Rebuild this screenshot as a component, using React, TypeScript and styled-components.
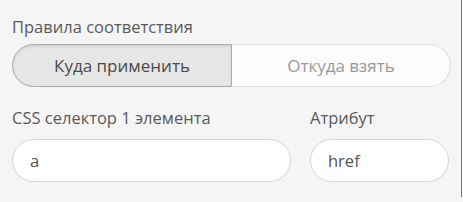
import { useState } from "react";
import styled, { createGlobalStyle } from "styled-components";

const Global = createGlobalStyle`
  html, body {
    margin: 0;
    padding: 0;
    background: #f5f5f5;
  }
  body {
    font-family: "Open Sans", "Noto Sans", sans-serif;
    color: #5a5a5a;
  }
`;

const Panel = styled.div`
  width: 462px;
  height: 197px;
  border-right: 1px solid #777;
  box-sizing: border-box;
  padding: 16px 12px 0 12px;
  overflow: hidden;
`;

const Label = styled.div<{ $gap?: number }>`
  font-size: 16.5px;
  line-height: 22px;
  color: #5a5a5a;
  margin-bottom: ${(p) => p.$gap ?? 6}px;
`;

const Segmented = styled.div`
  display: flex;
  width: 439px;
  height: 43px;
  margin-bottom: 20px;
`;

const Segment = styled.button<{ $active?: boolean; $side: "left" | "right" }>`
  flex: 1;
  box-sizing: border-box;
  height: 100%;
  margin: 0;
  font-family: inherit;
  font-size: 17px;
  cursor: pointer;
  color: ${(p) => (p.$active ? "#4a4a4a" : "#999")};
  background: ${(p) => (p.$active ? "#e6e6e6" : "#fcfcfc")};
  border: 1px solid ${(p) => (p.$active ? "#aaa" : "#ddd")};
  box-shadow: ${(p) => (p.$active ? "inset 0 1px 3px rgba(0,0,0,0.12)" : "none")};
  border-radius: ${(p) => (p.$side === "left" ? "22px 0 0 22px" : "0 22px 22px 0")};
  ${(p) => (p.$side === "right" ? "border-left: none;" : "")}
`;

const Row = styled.div`
  display: flex;
  gap: 19px;
  margin-bottom: 18px;
`;

const Field = styled.div<{ $width: number }>`
  width: ${(p) => p.$width}px;
  display: flex;
  flex-direction: column;
`;

const Input = styled.input`
  box-sizing: border-box;
  width: 100%;
  height: 43px;
  border: 1px solid #d6d6d6;
  border-radius: 22px;
  background: #fff;
  padding: 0 17px;
  font-family: inherit;
  font-size: 16.5px;
  color: #555;
  outline: none;
`;

export default function App() {
  const [mode, setMode] = useState<"target" | "source">("target");
  const [selector, setSelector] = useState("a");
  const [attr, setAttr] = useState("href");

  return (
    <>
      <Global />
      <Panel>
        <Label>Правила соответствия</Label>
        <Segmented>
          <Segment $side="left" $active={mode === "target"} onClick={() => setMode("target")}>
            Куда применить
          </Segment>
          <Segment $side="right" $active={mode === "source"} onClick={() => setMode("source")}>
            Откуда взять
          </Segment>
        </Segmented>
        <Row>
          <Field $width={279}>
            <Label $gap={10}>CSS селектор 1 элемента</Label>
            <Input value={selector} onChange={(e) => setSelector(e.target.value)} />
          </Field>
          <Field $width={139}>
            <Label $gap={10}>Атрибут</Label>
            <Input value={attr} onChange={(e) => setAttr(e.target.value)} />
          </Field>
        </Row>
        <Field $width={279}>
          <Input value="" readOnly />
        </Field>
      </Panel>
    </>
  );
}
